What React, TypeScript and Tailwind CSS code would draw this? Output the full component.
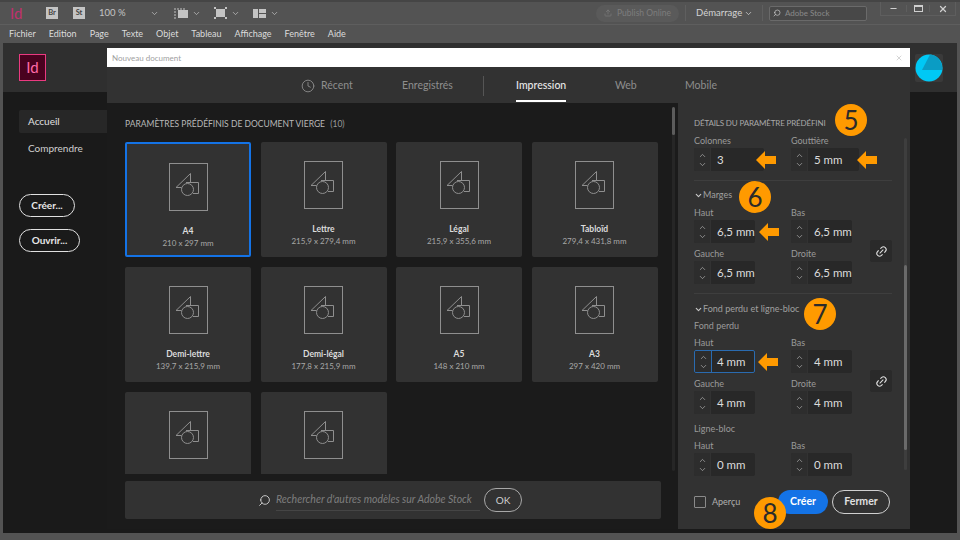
import React from "react";
import { ChevronDown, ChevronUp, Link2, Search, Upload, Minus, X, Clock } from "lucide-react";

const font = { fontFamily: 'Lato, "Open Sans", sans-serif' };

function Doc() {
  return (
    <svg width="39" height="48" viewBox="0 0 39 48" fill="none" stroke="#8f8f8f" strokeWidth="1">
      <rect x="0.5" y="0.5" width="38" height="47" />
      <path d="M21.5 10.5 L7 24.5 H12.5" />
      <path d="M21.5 10.5 V20" />
      <path d="M17 19.5 H29.5 V30.5 H24" />
      <circle cx="18.5" cy="26.5" r="6" />
    </svg>
  );
}

function Card({ name, size, selected }: { name?: string; size?: string; selected?: boolean }) {
  return (
    <div
      className={`flex h-[115px] flex-col items-center rounded-[2px] bg-[#323232] pt-[19px] ${
        selected ? "border-2 border-[#1473e6] pt-[17px]" : ""
      }`}
    >
      <Doc />
      {name && <div className="mt-[14px] text-[8.5px] leading-[13px] font-bold text-[#dcdcdc]">{name}</div>}
      {size && <div className="text-[8px] leading-[11px] text-[#a8a8a8]">{size}</div>}
    </div>
  );
}

function Stepper({ value, w, focus }: { value: string; w: string; focus?: boolean }) {
  return (
    <div
      className={`flex h-[23px] ${w} rounded-[2px] bg-[#282828] ${focus ? "border border-[#2a6bb0]" : ""}`}
    >
      <div
        className={`flex w-[17px] shrink-0 flex-col items-center justify-center rounded-l-[2px] border-r bg-[#2d2d2d] ${
          focus ? "border-[#2a6bb0]" : "border-[#323232]"
        } text-[#b4b4b4]`}
      >
        <ChevronUp size={9} strokeWidth={1.8} />
        <ChevronDown size={9} strokeWidth={1.8} />
      </div>
      <div className={`flex items-center text-[11.5px] whitespace-nowrap text-[#dcdcdc] ${focus ? "pl-[5px]" : "pl-[6px]"}`}>{value}</div>
    </div>
  );
}

function Field({ label, value, w = "w-[61px]", focus }: { label: string; value: string; w?: string; focus?: boolean }) {
  return (
    <div>
      <div className="h-[14px] text-[9px] leading-[14px] text-[#9a9a9a]">{label}</div>
      <Stepper value={value} w={w} focus={focus} />
    </div>
  );
}

function Section({ children }: { children: React.ReactNode }) {
  return (
    <div className="flex h-[14px] items-center text-[9px] whitespace-nowrap text-[#a0a0a0]">
      <ChevronDown size={9} strokeWidth={3} className="text-[#c8c8c8]" />
      {children}
    </div>
  );
}

function Quad({ a, b, c, d, focus }: { a: string; b: string; c: string; d: string; focus?: boolean }) {
  return (
    <div className="relative grid w-[158px] grid-cols-[97px_61px] gap-y-[4px]">
      <Field label="Haut" value={a} focus={focus} />
      <Field label="Bas" value={b} />
      <Field label="Gauche" value={c} />
      <Field label="Droite" value={d} />
      <div className="absolute top-[34px] left-[176px] flex h-[22px] w-[22px] items-center justify-center rounded-[2px] bg-[#2a2a2a] text-[#dcdcdc]">
        <Link2 size={13} strokeWidth={2} className="-rotate-45" />
      </div>
    </div>
  );
}

function Badge({ n, cls }: { n: string; cls: string }) {
  return (
    <div
      className={`absolute flex h-[32px] w-[32px] items-center justify-center rounded-full bg-[#ff9a00] text-[26px] leading-none text-[#2b2b2b] ${cls}`}
    >
      {n}
    </div>
  );
}

function Arrow({ cls }: { cls: string }) {
  return (
    <svg className={`absolute ${cls}`} width="20" height="18" viewBox="0 0 20 18">
      <path d="M0 9 L9 0 V5 H20 V13 H9 V18 Z" fill="#ff9a00" />
    </svg>
  );
}

function Tool({ children }: { children: React.ReactNode }) {
  return (
    <div className="flex items-center gap-[4px] text-[#c4c4c4]">
      {children}
      <ChevronDown size={9} strokeWidth={2} className="text-[#c0c0c0]" />
    </div>
  );
}

export default function App() {
  const menu = ["Fichier", "Edition", "Page", "Texte", "Objet", "Tableau", "Affichage", "Fenêtre", "Aide"];
  return (
    <div style={font} className="relative flex h-[540px] w-[960px] flex-col overflow-hidden bg-[#535353]">
      {/* app bar */}
      <div className="flex h-[25px] shrink-0 items-center border-t-2 border-b border-t-[#454545] border-b-[#5e5e5e] pl-[10px]">
        <span className="w-[36px] text-[15px] leading-none text-[#c0306e]">Id</span>
        <span className="flex h-[12px] w-[12px] items-center justify-center bg-[#c4c4c4] text-[7.5px] font-bold text-[#444]">Br</span>
        <span className="ml-[15px] flex h-[12px] w-[12px] items-center justify-center bg-[#c4c4c4] text-[7.5px] font-bold text-[#444]">St</span>
        <span className="ml-[14px] w-[51px] text-[9.5px] text-[#c4c4c4]">100 %</span>
        <ChevronDown size={9} strokeWidth={2} className="text-[#c0c0c0]" />
        <div className="ml-[15px] flex items-center gap-[13px]">
          <Tool>
            <svg width="14" height="12" viewBox="0 0 14 12">
              <rect x="4" y="3" width="10" height="8" fill="#c4c4c4" />
              <path d="M0 2h12M0 5h3M0 8h3M0 11h3" stroke="#c4c4c4" strokeDasharray="2 1" />
            </svg>
          </Tool>
          <Tool>
            <svg width="13" height="12" viewBox="0 0 13 12">
              <rect x="2" y="2" width="9" height="8" fill="#c4c4c4" />
              <path d="M0 0h2v2H0zM11 0h2v2h-2zM0 10h2v2H0zM11 10h2v2h-2z" fill="#c4c4c4" />
            </svg>
          </Tool>
          <Tool>
            <svg width="13" height="9" viewBox="0 0 13 9">
              <path d="M0 0h5v9H0zM6 0h7v4H6zM6 5h7v4H6z" fill="#c4c4c4" />
            </svg>
          </Tool>
        </div>
        <div className="ml-auto flex h-full items-center">
          <div className="flex h-[17px] w-[83px] items-center justify-center gap-[5px] rounded-full bg-[#5a5a5a] text-[8.5px] text-[#7d7d7d]">
            <Upload size={8} />
            Publish Online
          </div>
          <div className="mx-[6px] h-[16px] w-px bg-[#5f5f5f]" />
          <span className="ml-[4px] w-[45px] text-[9.5px] text-[#d4d4d4]">Démarrage</span>
          <ChevronDown size={9} strokeWidth={2} className="mr-[9px] ml-[3px] text-[#d4d4d4]" />
          <div className="h-[16px] w-px bg-[#5f5f5f]" />
          <div className="ml-[6px] flex h-[15px] w-[98px] items-center gap-[4px] rounded-[2px] border border-[#6a6a6a] bg-[#484848] pl-[3px] text-[8px] text-[#8a8a8a]">
            <Search size={8} className="-scale-x-100 text-[#d0d0d0]" />
            Adobe Stock
          </div>
          <div className="ml-[13px] flex h-[14px] w-[76px] items-center self-start border-x border-b border-[#5e5e5e] text-[#cfcfcf]">
            <div className="flex w-[25px] justify-center"><Minus size={9} strokeWidth={3} /></div>
            <div className="flex w-[25px] justify-center border-x border-[#5e5e5e]"><div className="h-[7px] w-[9px] border-[1.5px] border-t-[2px] border-[#cfcfcf]" /></div>
            <div className="flex w-[25px] justify-center"><X size={10} strokeWidth={3} /></div>
          </div>
          <div className="w-[4px]" />
        </div>
      </div>
      {/* menu */}
      <div className="flex h-[18px] shrink-0 items-center gap-[13px] pl-[9px] text-[9px] text-[#dcdcdc]">
        {menu.map((m) => (
          <span key={m}>{m}</span>
        ))}
      </div>
      {/* start workspace */}
      <div className="mr-[3px] mb-[7px] ml-[3px] flex min-h-0 flex-1 flex-col bg-[#1a1a1a]">
        <div className="flex h-[49px] shrink-0 items-center justify-between bg-[#2f2f2f] pr-[14px] pl-[16px]">
          <div className="flex h-[27px] w-[27px] items-center justify-center border border-[#ea3a80] bg-[#49021f] text-[15px] leading-none text-[#ff6aa8]">
            Id
          </div>
          <div className="flex h-[28px] w-[28px] items-center justify-center rounded-[2px] bg-[#3a3a3a]">
            <svg width="28" height="28" viewBox="0 0 28 28">
              <circle cx="14" cy="14" r="13.5" fill="#00c8f5" />
              <path d="M15 .5 L7 16 H27 A13.5 13.5 0 0 0 15 .5Z" fill="#0a9cc4" />
            </svg>
          </div>
        </div>
        <div className="flex flex-col px-[16px] pt-[18px]">
          <div className="flex h-[23px] w-[88px] items-center rounded-l-[2px] bg-[#272727] pl-[9px] text-[10px] text-[#e0e0e0]">Accueil</div>
          <div className="flex h-[31px] items-center pl-[9px] text-[10px] text-[#d0d0d0]">Comprendre</div>
          <div className="mt-[30px] flex h-[23px] w-[56px] items-center justify-center rounded-full border-[1.5px] border-[#e0e0e0] text-[10px] font-bold text-[#e8e8e8]">Créer...</div>
          <div className="mt-[12px] flex h-[23px] w-[61px] items-center justify-center rounded-full border-[1.5px] border-[#e0e0e0] text-[10px] font-bold text-[#e8e8e8]">Ouvrir...</div>
        </div>
      </div>

      {/* dialog */}
      <div className="absolute top-[48px] left-[107px] flex h-[481px] w-[803px] flex-col bg-[#323232]">
        <div className="flex h-[19px] shrink-0 items-center justify-between bg-white pt-[1px] pr-[7px] pl-[5px] text-[8px] text-[#a0a0a0]">
          Nouveau document
          <X size={8} className="text-[#c0c0c0]" />
        </div>
        <div className="flex h-[36px] shrink-0 items-center pt-[2px] pl-[194px] text-[10.5px] text-[#8e8e8e]">
          <Clock size={14} strokeWidth={1.5} className="mr-[6px]" />
          <span className="w-[31px]">Récent</span>
          <span className="ml-[50px] w-[50px] whitespace-nowrap">Enregistrés</span>
          <div className="mr-[32px] ml-[31px] h-[20px] w-px bg-[#555]" />
          <span className="relative w-[50px] font-medium whitespace-nowrap text-[#e8e8e8]">
            Impression
            <span className="absolute right-0 -bottom-[8px] left-0 h-[2px] bg-white" />
          </span>
          <span className="ml-[49px] w-[21px]">Web</span>
          <span className="ml-[49px]">Mobile</span>
        </div>
        <div className="flex min-h-0 flex-1">
          {/* presets */}
          <div className="relative flex w-[571px] shrink-0 flex-col bg-[#1b1b1b] pt-[15px] pl-[18px]">
            <div className="h-[12px] text-[8.5px] leading-[12px] whitespace-nowrap text-[#b8b8b8]">
              PARAMÈTRES PRÉDÉFINIS DE DOCUMENT VIERGE <span className="ml-[3px] text-[#999]">(10)</span>
            </div>
            <div className="mt-[12px] grid h-[332px] w-[533px] shrink-0 grid-cols-[126px_126px_126px_126px] content-start gap-x-[9.5px] gap-y-[10px] overflow-hidden">
              <Card name="A4" size="210 x 297 mm" selected />
              <Card name="Lettre" size="215,9 x 279,4 mm" />
              <Card name="Légal" size="215,9 x 355,6 mm" />
              <Card name="Tabloïd" size="279,4 x 431,8 mm" />
              <Card name="Demi-lettre" size="139,7 x 215,9 mm" />
              <Card name="Demi-légal" size="177,8 x 215,9 mm" />
              <Card name="A5" size="148 x 210 mm" />
              <Card name="A3" size="297 x 420 mm" />
              <Card />
              <Card />
            </div>
            <div className="mt-[7px] flex h-[38px] w-[536px] items-center rounded-[2px] bg-[#323232] pl-[133px]">
              <Search size={13} strokeWidth={1.8} className="-scale-x-100 text-[#c8c8c8]" />
              <span className="ml-[5px] w-[204px] border-b border-[#454545] pt-[3px] pb-[3px] text-[10.5px] whitespace-nowrap text-[#7e7e7e] italic">
                Rechercher d'autres modèles sur Adobe Stock
              </span>
              <span className="ml-[4px] flex h-[24px] w-[38px] items-center justify-center rounded-full border-[1.5px] border-[#a8a8a8] text-[10px] text-[#d0d0d0]">OK</span>
            </div>
            <div className="absolute top-[4px] right-[3px] h-[364px] w-[3px] rounded-full bg-[#262626]">
              <div className="h-[28px] w-[3px] rounded-full bg-[#5c5c5c]" />
            </div>
          </div>
          {/* details */}
          <div className="relative flex-1 pt-[14px] pl-[16px]">
            <div className="h-[12px] text-[8px] leading-[12px] tracking-[-0.15px] whitespace-nowrap text-[#a8a8a8]">DÉTAILS DU PARAMÈTRE PRÉDÉFINI</div>
            <div className="mt-[5px] grid w-[166px] grid-cols-[97px_69px]">
              <Field label="Colonnes" value="3" w="w-[70px]" />
              <Field label="Gouttière" value="5 mm" w="w-[68px]" />
            </div>
            <div className="mt-[9px] w-[198px] border-t border-[#3e3e3e]" />
            <div className="mt-[7px]"><Section>Marges</Section></div>
            <div className="mt-[4px]">
              <Quad a="6,5 mm" b="6,5 mm" c="6,5 mm" d="6,5 mm" />
            </div>
            <div className="mt-[9px] w-[198px] border-t border-[#3e3e3e]" />
            <div className="mt-[8px]"><Section>Fond perdu et ligne-bloc</Section></div>
            <div className="mt-[3px] h-[14px] text-[9px] leading-[14px] text-[#9a9a9a]">Fond perdu</div>
            <div className="mt-[3px]">
              <Quad a="4 mm" b="4 mm" c="4 mm" d="4 mm" focus />
            </div>
            <div className="mt-[8px] h-[14px] text-[9px] leading-[14px] text-[#9a9a9a]">Ligne-bloc</div>
            <div className="mt-[3px] grid w-[158px] grid-cols-[97px_61px]">
              <Field label="Haut" value="0 mm" />
              <Field label="Bas" value="0 mm" />
            </div>
            <div className="mt-[14px] flex h-[24px] items-center">
              <div className="h-[12px] w-[12px] rounded-[1px] border-[1.5px] border-[#8a8a8a]" />
              <span className="ml-[6px] w-[30px] text-[9px] text-[#b0b0b0]">Aperçu</span>
              <span className="ml-[36px] flex h-[24px] w-[50px] items-center justify-center rounded-full bg-[#1473e6] text-[10.5px] font-bold text-white">Créer</span>
              <span className="ml-[4px] flex h-[24px] w-[58px] items-center justify-center rounded-full border-[1.5px] border-[#d0d0d0] text-[10.5px] font-bold text-[#e0e0e0]">Fermer</span>
            </div>
            <div className="absolute top-[35px] right-[3px] h-[332px] w-[3px] rounded-full bg-[#3e3e3e]">
              <div className="mt-[127px] h-[185px] w-[3px] rounded-full bg-[#6a6a6a]" />
            </div>
          </div>
        </div>
      </div>

      {/* annotations */}
      <Arrow cls="top-[151px] left-[756px]" />
      <Arrow cls="top-[151px] left-[857px]" />
      <Arrow cls="top-[223px] left-[759px]" />
      <Arrow cls="top-[353px] left-[758px]" />
      <Badge n="5" cls="top-[104px] left-[835px]" />
      <Badge n="6" cls="top-[181px] left-[739px]" />
      <Badge n="7" cls="top-[298px] left-[804px]" />
      <Badge n="8" cls="top-[497px] left-[754px]" />
    </div>
  );
}
